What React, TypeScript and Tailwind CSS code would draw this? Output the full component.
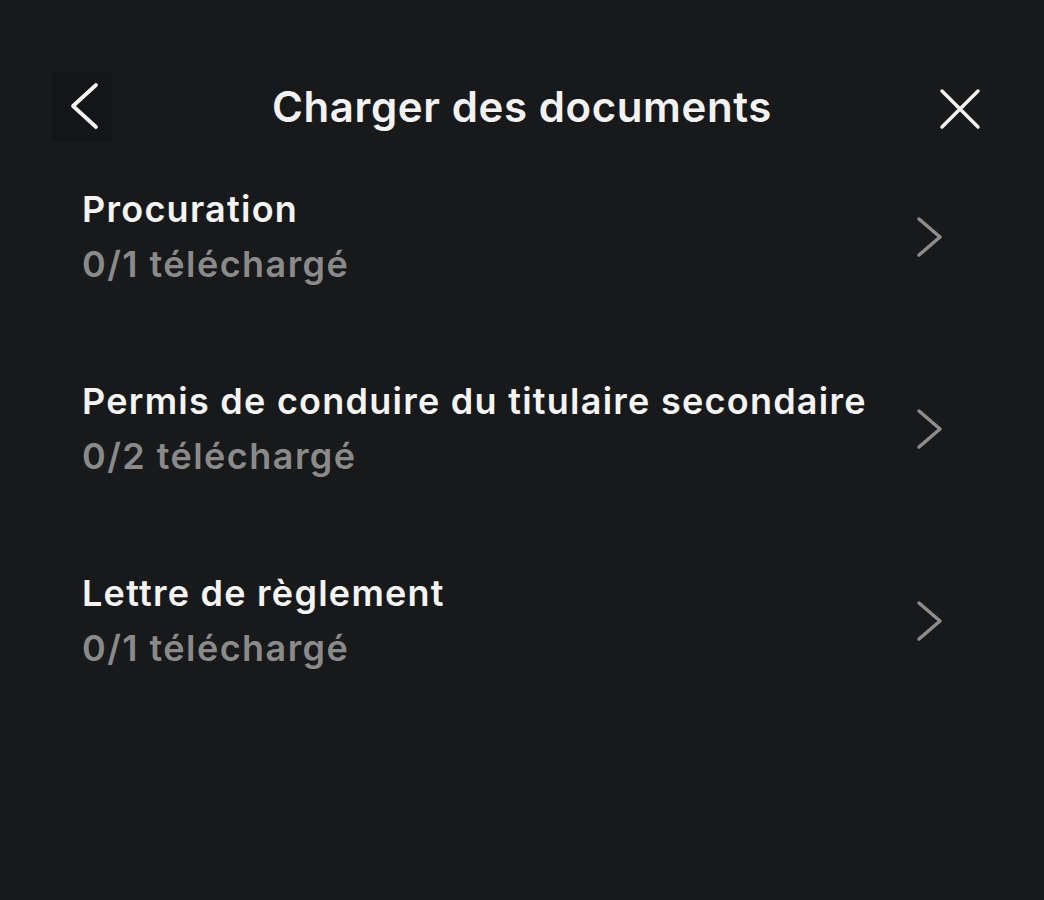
const docs = [
  { title: "Procuration", count: "0/1 téléchargé" },
  { title: "Permis de conduire du titulaire secondaire", count: "0/2 téléchargé" },
  { title: "Lettre de règlement", count: "0/1 téléchargé" },
]

function Chevron() {
  return (
    <svg width="28" height="42" viewBox="0 0 28 42" fill="none">
      <path d="M3 3 L24 21 L3 39" stroke="#8c8c8c" strokeWidth="3.5" strokeLinecap="round" strokeLinejoin="round" />
    </svg>
  )
}

export default function App() {
  return (
    <div className="w-[1044px] h-[900px] bg-[#18191b] text-white font-['Inter',sans-serif]">
      {/* Header */}
      <div className="flex items-center justify-between pt-[72px] pl-[52px] pr-[62px]">
        <div className="w-[60px] h-[70px] bg-[#141517] flex items-center">
          <svg width="34" height="48" viewBox="0 0 34 48" fill="none" className="ml-[16px] -mt-[2px]">
            <path d="M28 3 L5 24 L28 45" stroke="#f2f2f2" strokeWidth="3.8" strokeLinecap="round" strokeLinejoin="round" />
          </svg>
        </div>
        <h1 className="text-[42px] font-semibold tracking-[0.6px] text-[#f2f2f2] -mt-[2px] -ml-[6px]">Charger des documents</h1>
        <svg width="44" height="44" viewBox="0 0 44 44" fill="none" className="mt-[4px]">
          <path d="M4 4 L40 40 M40 4 L4 40" stroke="#f2f2f2" strokeWidth="3.5" strokeLinecap="round" />
        </svg>
      </div>

      {/* Documents */}
      <div className="flex flex-col gap-[97px] mt-[47px] pl-[82px] pr-[100px]">
        {docs.map((d) => (
          <div key={d.title} className="flex items-center justify-between">
            <div className="flex flex-col">
              <p className="text-[36px] leading-[40px] font-semibold tracking-[1.25px] text-[#f4f4f4]">{d.title}</p>
              <p className="text-[36px] leading-[40px] font-semibold tracking-[1.45px] text-[#8a8a8a] mt-[15px]">{d.count}</p>
            </div>
            <Chevron />
          </div>
        ))}
      </div>
    </div>
  )
}
